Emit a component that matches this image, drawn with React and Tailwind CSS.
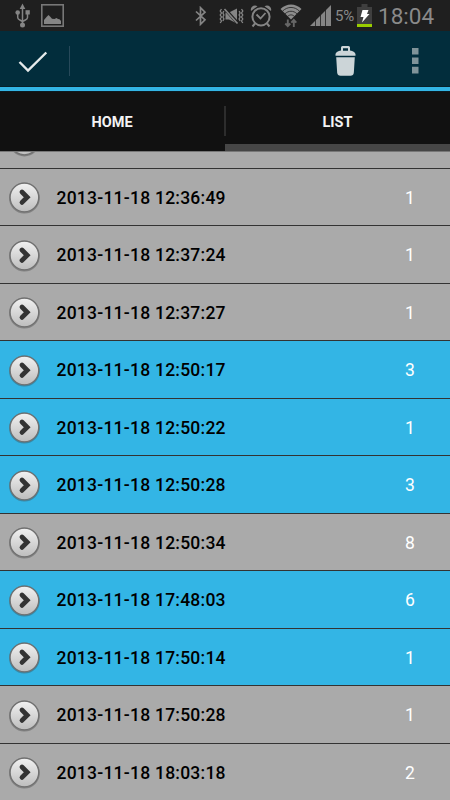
import React from 'react';

const rows = [
  { date: '2013-11-18 12:36:49', count: 1, selected: false },
  { date: '2013-11-18 12:37:24', count: 1, selected: false },
  { date: '2013-11-18 12:37:27', count: 1, selected: false },
  { date: '2013-11-18 12:50:17', count: 3, selected: true },
  { date: '2013-11-18 12:50:22', count: 1, selected: true },
  { date: '2013-11-18 12:50:28', count: 3, selected: true },
  { date: '2013-11-18 12:50:34', count: 8, selected: false },
  { date: '2013-11-18 17:48:03', count: 6, selected: true },
  { date: '2013-11-18 17:50:14', count: 1, selected: true },
  { date: '2013-11-18 17:50:28', count: 1, selected: false },
  { date: '2013-11-18 18:03:18', count: 2, selected: false },
];

function UsbIcon() {
  return (
    <svg className="ml-[15px] shrink-0" width="16" height="26" viewBox="0 0 16 26" fill="none" stroke="#858585" strokeWidth="1.5">
      <path d="M7.500 5v16.500M2.700 10.500v4c0 1.600 1 2 2.200 2.500l2.600 1.500M12.500 10v4.500c0 1.600-1 2-2.200 2.500l-2.800 1.500" />
      <path d="M7.500 .5 10.300 6H4.700z" fill="#858585" stroke="none" />
      <circle cx="2.700" cy="9.500" r="2.300" fill="#858585" stroke="none" />
      <path d="M10.500 7.200h4.300v4.300h-4.300z" fill="#858585" stroke="none" />
      <circle cx="7.500" cy="22" r="2.500" fill="#858585" stroke="none" />
    </svg>
  );
}

function PictureIcon() {
  return (
    <svg className="ml-[10px] shrink-0" width="23" height="23" viewBox="0 0 23 23">
      <rect x=".8" y=".8" width="21.4" height="21.4" fill="none" stroke="#777" strokeWidth="1.600" />
      <path d="M3 20v-4l2.500-3 2-2 2 2 1.500 1.800 2.500.200 2-1 1.500 1 1.500.200L20 17v3z" fill="#858585" />
    </svg>
  );
}

function BluetoothIcon() {
  return (
    <svg className="shrink-0" width="12" height="20" viewBox="0 0 12 20" fill="none" stroke="#858585" strokeWidth="1.700">
      <path d="m1 5.500 9 8.300-4.500 4.500V1.700L10 6.200 1 14.500" />
    </svg>
  );
}

function MuteVibrateIcon() {
  return (
    <svg className="ml-[12px] shrink-0" width="25" height="18" viewBox="0 0 25 18">
      <g fill="none" stroke="#858585" strokeWidth="1.300">
        <path d="m2.500 2-1.300 2 1.300 2-1.300 2 1.300 2-1.300 2 1.300 2-1.300 2M4.800 4 3.900 6l1 2-1 2 1 2-1 2" />
        <path d="m22.500 2 1.300 2-1.300 2 1.300 2-1.300 2 1.300 2-1.300 2 1.300 2M20.200 4l.9 2-1 2 1 2-1 2 1 2" />
      </g>
      <path d="M6.500 5.500H10L18 1.500v15L10 12.500H6.500z" fill="#858585" />
      <path d="m5.500 1.500 13.500 15" stroke="#1f1f1f" strokeWidth="3.300" />
      <path d="m5.500 2 13 14.500" stroke="#858585" strokeWidth="1.700" />
    </svg>
  );
}

function AlarmIcon() {
  return (
    <svg className="ml-[6px] shrink-0" width="22" height="24" viewBox="0 0 22 24" fill="none" stroke="#858585">
      <circle cx="11" cy="12.800" r="8.600" strokeWidth="2" />
      <path d="M6.500 10.500 10.500 14.500l5-5.500" strokeWidth="1.800" />
      <path d="m5 19.500-2.500 3M17 19.500l2.500 3" strokeWidth="2" />
      <path d="M1 7C-.2 3 4 0 7.500 2.200zM21 7C22.200 3 18 0 14.500 2.200z" fill="#858585" stroke="none" />
    </svg>
  );
}

function WifiIcon() {
  return (
    <svg className="ml-[8px] shrink-0" width="22" height="24" viewBox="0 0 22 24" fill="none">
      <path d="M.5 5C6.500-1 15.500-1 21.500 5L11 15.500z" fill="#8c8c8c" />
      <path d="M2.500 7.200c5-5 12-5 17 0M5 9.800c3.500-3.400 8.500-3.400 12 0M7.600 12.400c2-2 4.800-2 6.800 0" stroke="#1f1f1f" strokeWidth=".8" />
      <path d="M7.800 15.500v6.500M5.300 19.500l2.500 2.700 2.500-2.700M13.800 23v-7M11.300 18.700l2.500-2.700 2.500 2.700" stroke="#666" strokeWidth="1.900" />
    </svg>
  );
}

function SignalIcon() {
  return (
    <svg className="ml-[8px] shrink-0" width="21" height="21" viewBox="0 0 21 21">
      <path d="M0 21 21 0v21z" fill="#858585" />
      <path d="M5.500 0v21M10.500 0v21M15.500 0v21" stroke="#1f1f1f" strokeWidth=".8" />
    </svg>
  );
}

function BatteryIcon() {
  return (
    <svg className="ml-[2px] shrink-0" width="15" height="23" viewBox="0 0 15 23">
      <path d="M4.500 0h6v3H15v20H0V3h4.500z" fill="#3f3f3f" />
      <path d="M0 20h15v3H0z" fill="#99cc00" />
      <path d="M5.500 6h6l-1.500 4H12.500L5 18.500 6.500 13H3.500z" fill="#fff" />
    </svg>
  );
}

function StatusBar() {
  return (
    <div className="flex h-[31px] shrink-0 items-center bg-[#1f1f1f] text-[#8a8a8a]">
      <UsbIcon />
      <PictureIcon />
      <div className="ml-[131px] flex items-center">
        <BluetoothIcon />
        <MuteVibrateIcon />
        <AlarmIcon />
        <WifiIcon />
        <SignalIcon />
        <span className="ml-[4px] w-[20px] whitespace-nowrap pt-[2px] text-[15px] leading-none tracking-[-0.3px]">5%</span>
        <BatteryIcon />
        <span className="ml-[6px] pt-px text-[22.5px] leading-none">18:04</span>
      </div>
    </div>
  );
}

function ActionBar() {
  return (
    <div className="flex h-[61px] shrink-0 flex-col border-b border-[#0b1a21] bg-[#022d3c]">
      <div className="flex h-[56px] items-center border-b border-[#06202a]">
        <svg className="ml-[18px] mt-[6px] shrink-0" width="30" height="22" viewBox="0 0 30 22" fill="none" stroke="#e6eaeb" strokeWidth="2.400">
          <path d="m1.500 11 8.500 8.500L28.300 1.500" />
        </svg>
        <div className="ml-[21px] mt-[5px] h-[30px] w-px bg-[#27495a]" />
        <svg className="ml-[265px] mt-[5px] shrink-0" width="21" height="30" viewBox="0 0 21 30" fill="#ccd5d8">
          <path d="M6 4.500V1.500Q6 0 7.500 0h6Q15 0 15 1.500v3c3 .4 5 1.500 5.500 3.500v1.800H.5V8C1 6 3 4.900 6 4.500zM8 4.700h5V2.300H8z" />
          <path d="M1.200 11.300h18.600l-1 15.500Q18.500 29.800 15.500 29.800h-10Q2.500 29.800 2.200 26.800z" />
        </svg>
        <svg className="ml-[56px] mt-[5px] shrink-0" width="7" height="26" viewBox="0 0 7 26" fill="#809399">
          <path d="M0 0h6.500v6.500H0zM0 9.500h6.500V16H0zM0 18.800h6.500v6.700H0z" />
        </svg>
      </div>
      <div className="h-[4px] bg-[#33b5e5]" />
    </div>
  );
}

function Tabs() {
  return (
    <div className="flex h-[59px] shrink-0 bg-[#111] text-[14.5px] font-bold text-[#f3f3f3]">
      <div className="flex w-[224px] items-center justify-center pt-[3px]">HOME</div>
      <div className="mt-[14px] h-[30px] w-[2px] bg-[#2d2d2d]" />
      <div className="-ml-px flex flex-1 flex-col">
        <div className="flex h-[52px] items-center justify-center pt-[10px]">LIST</div>
        <div className="h-[7px] bg-[#464646]" />
      </div>
    </div>
  );
}

function DetailButton() {
  return (
    <svg className="ml-[8px] shrink-0" width="33" height="33" viewBox="0 0 33 33">
      <defs>
        <linearGradient id="buttonFace" x1="0" y1="0" x2="0" y2="1">
          <stop offset="0" stopColor="#f1f1f1" />
          <stop offset="1" stopColor="#bdbdbd" />
        </linearGradient>
      </defs>
      <circle cx="16.400" cy="17" r="15.400" fill="#444" opacity=".4" />
      <circle cx="16.400" cy="16.500" r="14.300" fill="url(#buttonFace)" stroke="#707070" strokeWidth="1.300" />
      <path d="m14 11 5.200 5.200-5.200 5.200" fill="none" stroke="#333" strokeWidth="4.800" strokeLinecap="round" />
    </svg>
  );
}

function ListRow({ row }) {
  return (
    <li className={`flex h-[57.5px] shrink-0 items-center border-b border-[#333] pt-[2px] ${row.selected ? 'bg-[#33b5e5]' : 'bg-[#aaa]'}`}>
      <DetailButton />
      <span className="ml-[15.5px] w-[300px] whitespace-nowrap text-[17.5px] font-medium tracking-[0.24px] text-black">{row.date}</span>
      <span className="ml-[33.5px] w-[40px] text-center text-[17.5px] text-white">{row.count}</span>
    </li>
  );
}

export default function App() {
  return (
    <main className="flex h-[800px] w-[450px] flex-col overflow-hidden bg-[#aaa] font-['Roboto',sans-serif]">
      <StatusBar />
      <ActionBar />
      <Tabs />
      <div className="min-h-0 flex-1 overflow-hidden border-t border-[#777]">
        <ul className="-mt-[41px] flex flex-col">
          <li className="flex h-[57.5px] shrink-0 items-center border-b border-[#333] bg-[#aaa] pt-[2px]">
            <DetailButton />
          </li>
          {rows.map((row) => (
            <ListRow key={row.date} row={row} />
          ))}
        </ul>
      </div>
    </main>
  );
}
